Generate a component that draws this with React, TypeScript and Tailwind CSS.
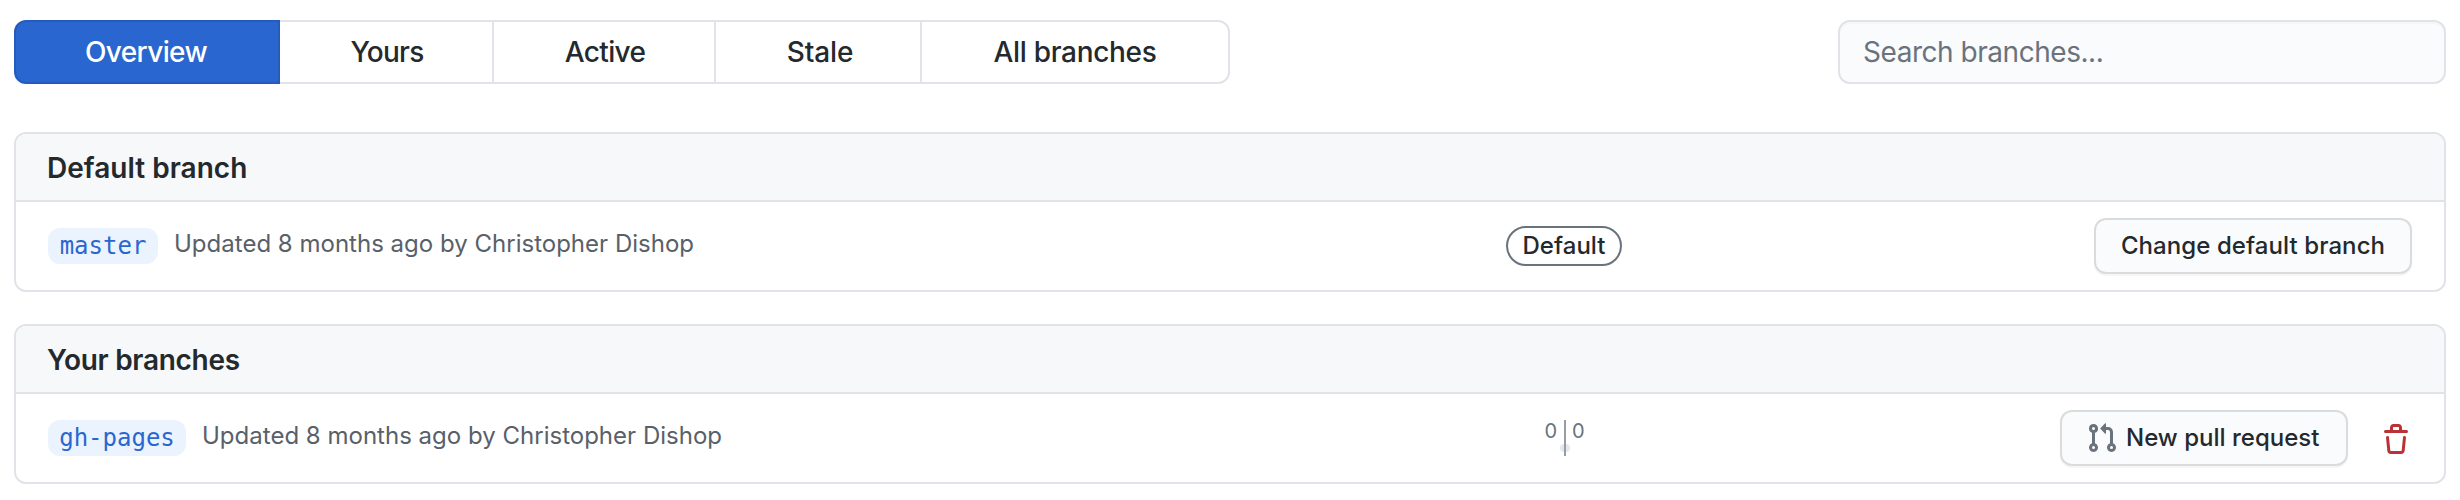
import type { ReactNode } from 'react'

const tabs = [
  { label: 'Yours', className: 'w-[214px] border-r-2 pl-[2px] tracking-[-0.75px]' },
  { label: 'Active', className: 'w-[222px] border-r-2 pl-[2px] tracking-[-0.68px]' },
  { label: 'Stale', className: 'w-[206px] border-r-2 pl-[4px] tracking-[-0.1px]' },
  { label: 'All branches', className: 'w-[308px] rounded-r-xl border-r-2 tracking-[-0.32px]' },
]

function PullRequestIcon() {
  return (
    <svg viewBox="0 0 16 16" className="size-8 shrink-0 fill-[#6a737d]" aria-hidden="true">
      <path
        fillRule="evenodd"
        d="M7.177 3.073L9.573.677A.25.25 0 0110 .854v4.792a.25.25 0 01-.427.177L7.177 3.427a.25.25 0 010-.354zM3.75 2.5a.75.75 0 100 1.5.75.75 0 000-1.5zm-2.25.75a2.25 2.25 0 113 2.122v5.256a2.251 2.251 0 11-1.5 0V5.372A2.25 2.25 0 011.5 3.25zM11 2.5h-1V4h1a1 1 0 011 1v5.628a2.251 2.251 0 101.5 0V5A2.5 2.5 0 0011 2.5zm1 10.25a.75.75 0 111.5 0 .75.75 0 01-1.5 0zM3.75 12a.75.75 0 100 1.5.75.75 0 000-1.5z"
      />
    </svg>
  )
}

function TrashIcon() {
  return (
    <svg viewBox="0 0 16 16" className="size-8 fill-[#bc3135]" aria-hidden="true">
      <path
        fillRule="evenodd"
        d="M6.5 1.75a.25.25 0 01.25-.25h2.5a.25.25 0 01.25.25V3h-3V1.75zm4.5 0V3h2.25a.75.75 0 010 1.5H2.75a.75.75 0 010-1.5H5V1.75C5 .784 5.784 0 6.75 0h2.5C10.216 0 11 .784 11 1.75zM4.496 6.675a.75.75 0 10-1.492.15l.66 6.6A1.75 1.75 0 005.405 15h5.19c.9 0 1.652-.681 1.741-1.576l.66-6.6a.75.75 0 00-1.492-.149l-.66 6.6a.25.25 0 01-.249.225h-5.19a.25.25 0 01-.249-.225l-.66-6.6z"
      />
    </svg>
  )
}

type BranchBoxProps = {
  title: string
  titleClassName: string
  branch: string
  branchClassName: string
  status: ReactNode
  actions: ReactNode
}

function BranchBox({ title, titleClassName, branch, branchClassName, status, actions }: BranchBoxProps) {
  return (
    <section className="h-40 overflow-hidden rounded-xl border-2 border-[#e2e3e8]">
      <header className="flex h-[68px] items-center border-b-2 border-[#e2e3e8] bg-[#f6f8fa] px-[31px] pt-[2px]">
        <h2 className={`text-[28px] leading-8 font-semibold ${titleClassName}`}>{title}</h2>
      </header>
      <div className="flex h-[88px] items-center px-8">
        <div className="flex w-[1358px] items-center">
          <a
            className={`flex h-9 items-center justify-center rounded-xl bg-[#eaf3fe] font-['DejaVu_Sans_Mono',monospace] text-[24px] leading-9 text-[#2a66cf] ${branchClassName}`}
          >
            {branch}
          </a>
          <span className="ml-4 pb-[5px] text-[24px] leading-9 tracking-[0.01px] text-[#586069]">
            Updated 8 months ago by Christopher Dishop
          </span>
        </div>
        <div className="flex w-[317px] justify-center">{status}</div>
        <div className="flex flex-1 items-center justify-end">{actions}</div>
      </div>
    </section>
  )
}

const buttonClass =
  'flex h-14 items-center rounded-xl border-2 border-[#d9dbdc] bg-[#fafbfc] text-[24px] leading-10 font-[540] text-[#24292e] shadow-[0_2px_0_rgba(27,31,35,0.04)]'

export default function App() {
  return (
    <main className="h-[500px] w-[2460px] bg-white px-[14px] pt-5 font-['Inter',sans-serif] text-[#24292e]">
      <div className="flex items-center justify-between">
        <nav className="flex text-[28px] font-[540]">
          <a className="flex h-16 w-[266px] items-center justify-center rounded-l-xl border-2 border-[#245bbd] bg-[#2a66cf] pr-[2px] tracking-[-0.62px] text-white">
            Overview
          </a>
          {tabs.map((tab) => (
            <a
              key={tab.label}
              className={`flex h-16 items-center justify-center border-y-2 border-[#e2e3e8] ${tab.className}`}
            >
              {tab.label}
            </a>
          ))}
        </nav>
        <input
          type="text"
          placeholder="Search branches..."
          className="h-16 w-[608px] rounded-xl border-2 border-[#e2e3e8] bg-[#fafbfc] px-[23px] text-[28px] tracking-[-0.46px] shadow-[inset_0_2px_0_rgba(225,228,232,0.2)] placeholder:text-[#6a737d]"
        />
      </div>

      <div className="mt-12 flex flex-col gap-8">
        <BranchBox
          title="Default branch"
          titleClassName="tracking-[0.02px]"
          branch="master"
          branchClassName="w-[110px]"
          status={
            <span className="mr-[2px] flex h-10 w-[116px] items-center justify-center rounded-full border-2 border-[#6a737d] pl-px text-[24px] leading-9 font-[540] tracking-[0.05px]">
              Default
            </span>
          }
          actions={<button className={`${buttonClass} w-[318px] justify-center tracking-[0.08px]`}>Change default branch</button>}
        />
        <BranchBox
          title="Your branches"
          titleClassName="tracking-[-0.28px]"
          branch="gh-pages"
          branchClassName="w-[138px]"
          status={
            <div className="flex h-9 text-[20px] leading-[22px] text-[#6a737d]">
              <div className="flex w-[19px] flex-col">
                <span>0</span>
                <span className="mt-[2px] ml-auto h-2 w-1 rounded-l-full bg-[#e6e8ec]" />
              </div>
              <span className="h-9 w-[2px] bg-[#959da5]" />
              <div className="flex w-[19px] flex-col">
                <span className="text-right">0</span>
                <span className="mt-[2px] h-2 w-1 rounded-r-full bg-[#e6e8ec]" />
              </div>
            </div>
          }
          actions={
            <>
              <button className={`${buttonClass} w-72 pl-6 tracking-[0.01px]`}>
                <PullRequestIcon />
                <span className="ml-2 whitespace-nowrap">New pull request</span>
              </button>
              <button className="ml-8 flex pt-1" aria-label="Delete branch">
                <TrashIcon />
              </button>
            </>
          }
        />
      </div>
    </main>
  )
}
